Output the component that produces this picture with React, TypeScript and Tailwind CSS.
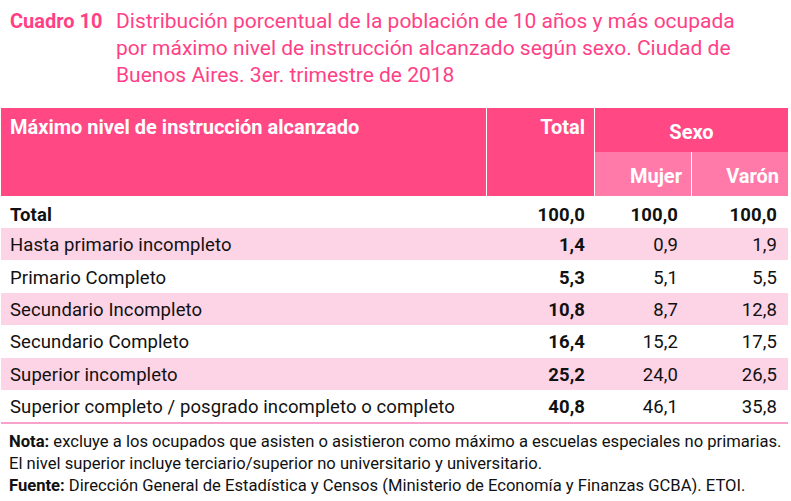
const rows = [
  { label: "Hasta primario incompleto", total: "1,4", mujer: "0,9", varon: "1,9" },
  { label: "Primario Completo", total: "5,3", mujer: "5,1", varon: "5,5" },
  { label: "Secundario Incompleto", total: "10,8", mujer: "8,7", varon: "12,8" },
  { label: "Secundario Completo", total: "16,4", mujer: "15,2", varon: "17,5" },
  { label: "Superior incompleto", total: "25,2", mujer: "24,0", varon: "26,5" },
  { label: "Superior completo / posgrado incompleto o completo", total: "40,8", mujer: "46,1", varon: "35,8" },
];

export default function App() {
  return (
    <div className="w-[791px] h-[501px] bg-white overflow-hidden font-['Roboto',sans-serif]">
      {/* Title */}
      <div className="flex pt-[8px] pl-[10px] leading-[27px] text-[#ff3f86]">
        <div className="font-bold w-[106px] shrink-0 text-[20px]">Cuadro 10</div>
        <div className="text-[21px] whitespace-nowrap">
          Distribución porcentual de la población de 10 años y más ocupada
          <br />
          por máximo nivel de instrucción alcanzado según sexo. Ciudad de
          <br />
          Buenos Aires. 3er. trimestre de 2018
        </div>
      </div>

      {/* Table */}
      <div className="mt-[19px] ml-[1px] w-[787px]">
        {/* Header */}
        <div className="grid grid-cols-[485px_1px_107px_1px_96px_1px_96px] h-[88px] bg-[#ff4884] text-white font-bold text-[20px]">
          <div className="row-span-2 pl-[9px] pt-[4px]">Máximo nivel de instrucción alcanzado</div>
          <div className="row-span-2 bg-white" />
          <div className="row-span-2 pr-[9px] pt-[4px] text-right">Total</div>
          <div className="row-span-2 bg-white" />
          <div className="col-span-3 h-[44px] flex items-center justify-center pt-[4px]">Sexo</div>
          <div className="h-[44px] bg-[#ff7aa8] flex items-center justify-end pr-[9px] pt-[4px]">Mujer</div>
          <div className="h-[44px] bg-white" />
          <div className="h-[44px] bg-[#ff7aa8] flex items-center justify-end pr-[9px] pt-[4px]">Varón</div>
        </div>

        {/* Body */}
        <div className="text-[18.5px] tracking-[0.1px] text-[#111]">
          <div className="grid grid-cols-[486px_108px_97px_96px] h-[32px] items-center font-bold pt-[6px]">
            <div className="pl-[9px]">Total</div>
            <div className="text-right pr-[10px]">100,0</div>
            <div className="text-right pr-[14px]">100,0</div>
            <div className="text-right pr-[11px]">100,0</div>
          </div>
          {rows.map((r, i) => (
            <div
              key={r.label}
              className={`grid grid-cols-[486px_108px_97px_96px] h-[32.4px] items-center pt-[4px] ${i % 2 === 0 ? "bg-[#fdd3e6]" : "bg-white"}`}
            >
              <div className="pl-[9px]">{r.label}</div>
              <div className="text-right pr-[10px] font-bold">{r.total}</div>
              <div className="text-right pr-[14px]">{r.mujer}</div>
              <div className="text-right pr-[11px]">{r.varon}</div>
            </div>
          ))}
          <div className="h-[2px] bg-[#f8a1cc]" />
        </div>
      </div>

      {/* Notes */}
      <div className="pl-[9px] pt-[7px] text-[16.6px] leading-[22px] text-[#111]">
        <div>
          <span className="font-bold">Nota:</span> excluye a los ocupados que asisten o asistieron como máximo a escuelas especiales no primarias.
        </div>
        <div>El nivel superior incluye terciario/superior no universitario y universitario.</div>
        <div>
          <span className="font-bold">Fuente:</span> Dirección General de Estadística y Censos (Ministerio de Economía y Finanzas GCBA). ETOI.
        </div>
      </div>
    </div>
  );
}
